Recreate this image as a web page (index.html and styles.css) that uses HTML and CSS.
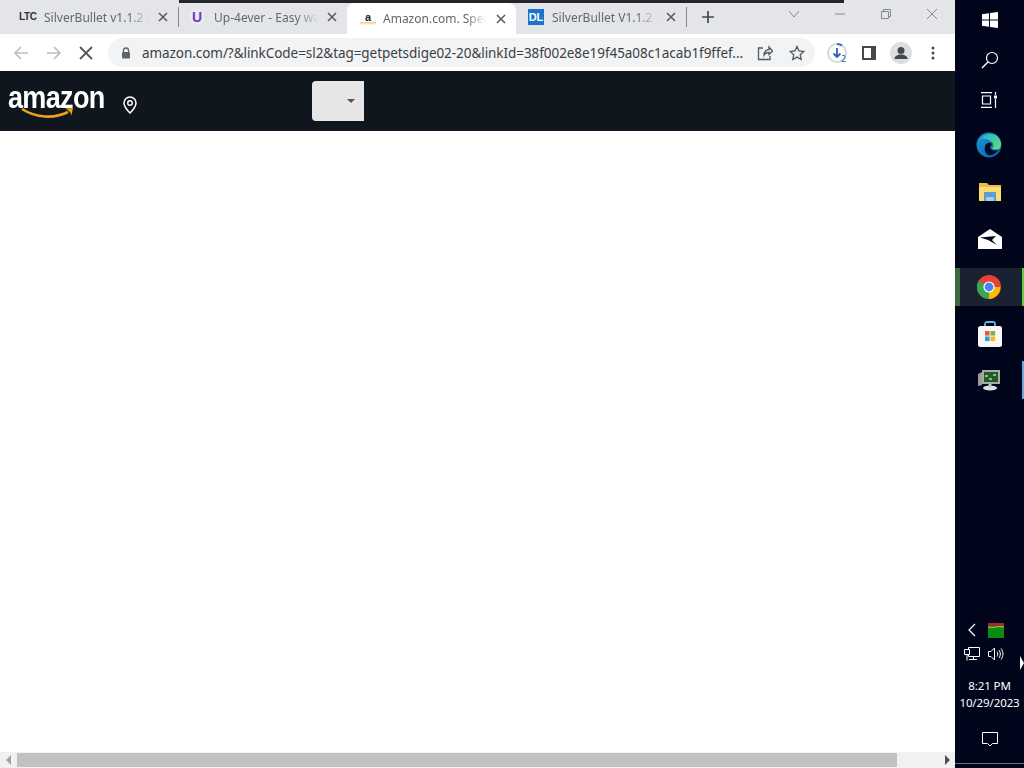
FILE: index.html
```html
<!DOCTYPE html>
<html>

<head>
    <meta charset="utf-8">
    <title>Amazon.com. Spend less. Smile more.</title>
    <link rel="stylesheet" href="styles.css">
</head>

<body>
    <div class="screen">
        <div class="browser">
            <div class="tabstrip">
                <div class="topbar"></div>
                <div class="tab tab-first">
                    <span class="fav fav-ltc">LTC</span>
                    <span class="tabtitle">SilverBullet v1.1.2 Cracked</span>
                    <svg class="tabclose" viewBox="0 0 10 10"><path d="M1 1l8 8M9 1l-8 8"/></svg>
                </div>
                <div class="tab tab-second">
                    <span class="fav fav-u">U</span>
                    <span class="tabtitle">Up-4ever - Easy way to share</span>
                    <svg class="tabclose" viewBox="0 0 10 10"><path d="M1 1l8 8M9 1l-8 8"/></svg>
                </div>
                <div class="tab tab-active">
                    <span class="fav fav-a">a</span>
                    <span class="tabtitle">Amazon.com. Spend less.</span>
                    <svg class="tabclose" viewBox="0 0 10 10"><path d="M1 1l8 8M9 1l-8 8"/></svg>
                </div>
                <div class="tab tab-last">
                    <span class="fav fav-dl">DL</span>
                    <span class="tabtitle">SilverBullet V1.1.2 Free</span>
                    <svg class="tabclose" viewBox="0 0 10 10"><path d="M1 1l8 8M9 1l-8 8"/></svg>
                </div>
                <svg class="newtab" viewBox="0 0 12 12"><path d="M6 0v12M0 6h12"/></svg>
                <div class="winctrls">
                    <svg class="winicon" viewBox="0 0 12 12"><path d="M1 3l5 6 5-6"/></svg>
                    <svg class="winicon" viewBox="0 0 12 12"><path d="M1 6h10"/></svg>
                    <svg class="winicon" viewBox="0 0 12 12"><path d="M1.500 3.500h7v7h-7zM3.500 3.500v-2h7v7h-2"/></svg>
                    <svg class="winicon" viewBox="0 0 12 12"><path d="M1 1l10 10M11 1l-10 10"/></svg>
                </div>
            </div>

            <div class="toolbar">
                <svg class="navicon nav-off" viewBox="0 0 16 16"><path d="M15 8H2M8 2L2 8l6 6"/></svg>
                <svg class="navicon nav-off" viewBox="0 0 16 16"><path d="M1 8h13M8 2l6 6-6 6"/></svg>
                <svg class="navicon nav-stop" viewBox="0 0 14 14"><path d="M1 1l12 12M13 1L1 13"/></svg>
                <div class="omnibox">
                    <svg class="lock" viewBox="0 0 10 12"><path d="M2.500 5V3.500a2.500 2.500 0 0 1 5 0V5" fill="none" stroke="#5f6368" stroke-width="1.300"/><rect x="1" y="5" width="8" height="6.500" rx="1" fill="#5f6368"/></svg>
                    <span class="url">amazon.com/?&amp;linkCode=sl2&amp;tag=getpetsdige02-20&amp;linkId=38f002e8e19f45a08c1acab1f9ffef...</span>
                    <svg class="omniicon share" viewBox="0 0 16 16"><path d="M6 3H1.500v11.500H13V11M7 10c0-3.500 2.500-5.500 5-5.500V2l3.500 4L12 9.500V7.500C10 7.500 8 8.300 7 10z"/></svg>
                    <svg class="omniicon star" viewBox="0 0 16 16"><path d="M8 1.500l2 4.500 4.800.5-3.600 3.200 1 4.800L8 12.100l-4.200 2.400 1-4.800L1.200 6.500 6 6z"/></svg>
                </div>
                <svg class="download" viewBox="0 0 22 22">
                    <circle cx="11" cy="11" r="9" fill="none" stroke="#d5d7da" stroke-width="2"/>
                    <path d="M11 2a9 9 0 0 1 5 1.500" fill="none" stroke="#2f62b8" stroke-width="2"/>
                    <path d="M11 6v9M7.500 11.500L11 15l3.500-3.500" fill="none" stroke="#2f62b8" stroke-width="1.800"/>
                </svg>
                <span class="dlcount">2</span>
                <div class="sidepanel"></div>
                <svg class="avatar" viewBox="0 0 22 22">
                    <circle cx="11" cy="11" r="11" fill="#dcdee1"/>
                    <circle cx="11" cy="8.500" r="3.500" fill="#44484d"/>
                    <path d="M4.500 17c0-3 3-4.500 6.500-4.500s6.500 1.500 6.500 4.500z" fill="#44484d"/>
                </svg>
                <svg class="kebab" viewBox="0 0 4 14"><circle cx="2" cy="2" r="1.500"/><circle cx="2" cy="7" r="1.500"/><circle cx="2" cy="12" r="1.500"/></svg>
            </div>

            <div class="amzbar">
                <div class="amzlogo">
                    <span class="amzword">amazon</span>
                    <svg class="amzsmile" viewBox="0 0 54 12"><path d="M1 2c14 9 32 10 46 3" fill="none" stroke="#f0a020" stroke-width="2.600"/><path d="M44 1.500l8-.5-1.500 7.500c-.5-3-3-5.500-6.500-7z" fill="#f0a020"/></svg>
                </div>
                <svg class="amzpin" viewBox="0 0 14 18"><path d="M7 1a6 6 0 0 0-6 6c0 4 6 10 6 10s6-6 6-10a6 6 0 0 0-6-6z" fill="none" stroke="#fff" stroke-width="1.500"/><circle cx="7" cy="7" r="2.300" fill="none" stroke="#fff" stroke-width="1.400"/></svg>
                <div class="amzselect"><span class="caret"></span></div>
            </div>

            <div class="content"></div>

            <div class="hscroll">
                <span class="arrow arrow-left"></span>
                <div class="track"><div class="thumb"></div></div>
                <span class="arrow arrow-right"></span>
            </div>
        </div>

        <div class="taskbar">
            <svg class="task-win" viewBox="0 0 16 16"><path d="M0 2.300l7-1v6.300H0zM8 1.100L16 0v7.600H8zM0 8.500h7v6.300l-7-1zM8 8.500h8V16l-8-1.100z" fill="#fff"/></svg>
            <svg class="task-search" viewBox="0 0 18 18"><circle cx="11" cy="7" r="5.500" fill="none" stroke="#fff" stroke-width="1.200"/><path d="M7 11l-6 6" stroke="#fff" stroke-width="1.400"/></svg>
            <svg class="task-view" viewBox="0 0 17 16" fill="none" stroke="#fff" stroke-width="1.200"><path d="M0 .6h11M0 15.400h11M1.500 4h8v8h-8zM14.500 0v3M14.500 7v9"/><rect x="13" y="3.500" width="3" height="3" fill="#fff" stroke="none"/></svg>
            <svg class="task-edge" viewBox="0 0 26 26">
                <defs>
                    <linearGradient id="edgeA" x1="0" y1="0" x2="1" y2="1"><stop offset="0" stop-color="#1a9bd7"/><stop offset="1" stop-color="#0c59a4"/></linearGradient>
                    <linearGradient id="edgeB" x1="0" y1="0" x2="1" y2="1"><stop offset="0" stop-color="#1db6d6"/><stop offset="1" stop-color="#6fdc6a"/></linearGradient>
                </defs>
                <circle cx="13" cy="13" r="12.500" fill="url(#edgeA)"/>
                <path d="M5 7c3-5 12-7 17-2 3 3 4 8 2 11-2 2-7 2-8 0 2-1 2-4 0-6-3-3-9-4-11-3z" fill="url(#edgeB)"/>
                <path d="M9 15c0-3 3-5 6-4 1 1 1 3-1 4 0 3 4 4 8 3-2 4-7 6-10 5-3-2-4-5-3-8z" fill="#020a2a"/>
            </svg>
            <svg class="task-folder" viewBox="0 0 22 18"><path d="M0 0h8l2 2h12v16H0z" fill="#e9bb4c"/><path d="M0 4h22v14H0z" fill="#fbdc6e"/><path d="M5 9h12v9h-2.500v-4h-7v4H5z" fill="#5a9fd4"/><rect x="7.500" y="14" width="7" height="4" fill="#a9cde8"/></svg>
            <svg class="task-mail" viewBox="0 0 24 20"><path d="M0 8L12 0l12 8v12H0z" fill="#fff"/><path d="M2 8.500L18 7l-4 4 5 5-9-5z" fill="#020a2a"/></svg>
            <div class="task-item task-chrome">
                <svg viewBox="0 0 24 24">
                    <circle cx="12" cy="12" r="12" fill="#e94235"/>
                    <path d="M12 12L1.600 6A12 12 0 0 0 12 24l5.200-9z" fill="#34a853"/>
                    <path d="M12 12h11.400A12 12 0 0 1 12 24z" fill="#fbbc04"/>
                    <circle cx="12" cy="12" r="5.600" fill="#fff"/>
                    <circle cx="12" cy="12" r="4.400" fill="#4285f4"/>
                </svg>
            </div>
            <svg class="task-store" viewBox="0 0 24 26">
                <path d="M7 6V3a2 2 0 0 1 2-2h6a2 2 0 0 1 2 2v3" fill="none" stroke="#63b2e0" stroke-width="1.800"/>
                <rect x="0" y="5" width="24" height="21" rx="2.500" fill="#f7f7f7"/>
                <rect x="7" y="10" width="4.600" height="4.600" fill="#e8573f"/>
                <rect x="12.500" y="10" width="4.600" height="4.600" fill="#7cb342"/>
                <rect x="7" y="15.500" width="4.600" height="4.600" fill="#2e9be0"/>
                <rect x="12.500" y="15.500" width="4.600" height="4.600" fill="#f9b916"/>
            </svg>
            <div class="task-item task-app">
                <svg viewBox="0 0 24 22">
                    <path d="M1 5l4-2v13l-4 1z" fill="#9a9d9c"/>
                    <rect x="5" y="1" width="18" height="14" fill="#a8aaa8"/>
                    <rect x="7" y="3" width="14" height="10" fill="#235a2c"/>
                    <path d="M8 6h3v2H8zM12 9h3v2h-3zM16 5h3v2h-3z" fill="#79c57f"/>
                    <ellipse cx="13" cy="19" rx="7" ry="2.400" fill="#e0e0e0"/>
                    <rect x="11.500" y="15" width="3" height="3" fill="#c6c6c6"/>
                </svg>
            </div>

            <div class="tray">
                <div class="trayrow trayrow-top">
                    <svg class="tray-chevron" viewBox="0 0 8 14"><path d="M7 1L1 7l6 6" fill="none" stroke="#fff" stroke-width="1.200"/></svg>
                    <svg class="tray-meter" viewBox="0 0 16 15"><rect width="16" height="15" fill="#0d8a12"/><rect width="16" height="3" fill="#a52a2a"/><path d="M0 4q4 1 8 0t8 0" fill="none" stroke="#9fcf4a"/></svg>
                </div>
                <div class="trayrow trayrow-bottom">
                    <svg class="tray-net" viewBox="0 0 16 14" fill="none" stroke="#fff"><path d="M4.500 .5h11v9h-11zM5 12.500h8M9.500 9.500v3"/><path d="M.5 2.500h5v5h-5z" fill="#020a2a"/><path d="M3 7.500v6"/></svg>
                    <svg class="tray-vol" viewBox="0 0 16 14" fill="none" stroke="#fff"><path d="M.5 4.500h2.500L6.500 1v12L3 9.500H.5zM9 4.500c1 1.500 1 3.500 0 5M11 3c1.800 2.500 1.800 5.500 0 8M13 1.500c2.600 3.500 2.600 7.500 0 11"/></svg>
                </div>
                <div class="clock">
                    <div>8:21 PM</div>
                    <div>10/29/2023</div>
                </div>
                <svg class="tray-notify" viewBox="0 0 16 15"><path d="M.5.500h15v11h-5L8 14l-2.500-2.500h-5z" fill="none" stroke="#fff"/></svg>
                <div class="trayline"></div>
            </div>
            <span class="pointer"></span>
        </div>
    </div>
</body>

</html>
```

FILE: styles.css
```css
* {
    padding: 0;
    margin: 0;
    box-sizing: border-box;
}

html, body {
    width: 1024px;
    height: 768px;
    overflow: hidden;
    background: #fff;
    font-family: "Noto Sans", "Liberation Sans", sans-serif;
}

.screen {
    display: flex;
    width: 1024px;
    height: 768px;
}

.browser {
    display: flex;
    flex-direction: column;
    width: 955px;
}

/* tabs */
.tabstrip {
    position: relative;
    display: flex;
    align-items: center;
    height: 34px;
    background: #e3e5e8;
}

.topbar {
    position: absolute;
    top: 0;
    left: 179px;
    width: 665px;
    height: 3px;
    background: #26262a;
}

.tab {
    display: flex;
    align-items: center;
    height: 34px;
    font-size: 12px;
    color: #63676b;
}

.tab-first {
    width: 179px;
    padding-left: 19px;
    border-right: 1px solid #85888c;
}

.tab-second {
    width: 168px;
    padding-left: 10px;
}

.tab-active {
    width: 169px;
    margin-top: 3px;
    height: 31px;
    padding-left: 13px;
    background: #fff;
    border-radius: 8px 8px 0 0;
}

.tab-last {
    width: 171px;
    padding-left: 12px;
    border-right: 1px solid #85888c;
}

.tab-first, .tab-last {
    border-image: linear-gradient(#e3e5e8 8px, #85888c 8px, #85888c 26px, #e3e5e8 26px) 1;
}

.fav {
    flex: none;
    display: block;
    width: 16px;
    height: 16px;
    margin-right: 9px;
    text-align: center;
    font-family: "Liberation Sans", sans-serif;
    font-weight: 700;
    line-height: 16px;
}

.fav-ltc {
    width: 16px;
    font-size: 10px;
    color: #333;
    letter-spacing: -.4px;
}

.fav-u {
    font-size: 14px;
    color: #6b3fc0;
    background: #ece9f2;
    border-radius: 50%;
}

.fav-a {
    font-size: 11px;
    line-height: 13px;
    color: #222;
    background: linear-gradient(#fff 11px, #f3c76d 11px, #fff 14px);
    margin-right: 7px;
}

.fav-dl {
    font-size: 11px;
    color: #fff;
    background: #1a76cc;
    margin-right: 8px;
}

.tabtitle {
    flex: 1;
    overflow: hidden;
    white-space: nowrap;
    -webkit-mask-image: linear-gradient(to right, #000 80%, transparent 100%);
    mask-image: linear-gradient(to right, #000 80%, transparent 100%);
}

.tabclose {
    flex: none;
    width: 10px;
    height: 10px;
    margin: 0 10px 0 9px;
    fill: none;
    stroke: #55585c;
    stroke-width: 1.500;
}

.newtab {
    flex: none;
    width: 12px;
    height: 12px;
    margin-left: 15px;
    fill: none;
    stroke: #45484c;
    stroke-width: 1.700;
}

.winctrls {
    display: flex;
    gap: 34px;
    margin-left: 74px;
    align-self: flex-start;
    padding-top: 8px;
}

.winicon {
    width: 12px;
    height: 12px;
    fill: none;
    stroke: #85888b;
    stroke-width: 1;
}

/* address bar */
.toolbar {
    position: relative;
    display: flex;
    align-items: center;
    height: 37px;
    padding-left: 13px;
    background: #fff;
}

.navicon {
    flex: none;
    width: 16px;
    height: 16px;
    fill: none;
    stroke-width: 1.700;
}

.nav-off {
    stroke: #bcbfc3;
    margin-right: 17px;
}

.nav-stop {
    width: 14px;
    height: 14px;
    margin-right: 15px;
    stroke: #55585c;
    stroke-width: 1.800;
}

.omnibox {
    display: flex;
    align-items: center;
    width: 707px;
    height: 29px;
    padding-left: 13px;
    background: #f1f3f4;
    border-radius: 15px;
}

.lock {
    flex: none;
    width: 10px;
    height: 12px;
    margin-right: 11px;
}

.url {
    flex: none;
    width: 601px;
    white-space: nowrap;
    font-size: 13.500px;
    letter-spacing: -.06px;
    color: #3c4043;
}

.omniicon {
    flex: none;
    width: 16px;
    height: 16px;
    fill: none;
    stroke: #55585c;
    stroke-width: 1.300;
}

.share {
    margin-left: 14px;
}

.star {
    margin-left: 16px;
}

.download {
    flex: none;
    width: 22px;
    height: 22px;
    margin-left: 11px;
}

.dlcount {
    position: absolute;
    left: 841px;
    top: 18px;
    font-size: 9px;
    color: #2f62b8;
}

.sidepanel {
    flex: none;
    width: 14px;
    height: 14px;
    margin-left: 14px;
    background: #fff;
    border: 2px solid #45484c;
    border-right-width: 5px;
}

.avatar {
    flex: none;
    width: 22px;
    height: 22px;
    margin-left: 14px;
}

.kebab {
    flex: none;
    width: 4px;
    height: 14px;
    margin-left: 19px;
    fill: #45484c;
}

/* amazon nav */
.amzbar {
    display: flex;
    align-items: center;
    height: 60px;
    background: #10161e;
}

.amzlogo {
    position: relative;
    flex: none;
    width: 123px;
    height: 60px;
    padding: 8px 0 0 8px;
}

.amzword {
    display: block;
    width: 110px;
    font-family: "Liberation Sans", sans-serif;
    font-weight: 700;
    font-size: 32px;
    line-height: 36px;
    letter-spacing: -.8px;
    color: #fff;
    transform: scaleX(.845);
    transform-origin: left center;
}

.amzsmile {
    position: absolute;
    left: 21px;
    top: 36px;
    width: 54px;
    height: 12px;
}

.amzpin {
    flex: none;
    width: 14px;
    height: 18px;
    margin-top: 8px;
}

.amzselect {
    display: flex;
    align-items: center;
    justify-content: flex-end;
    width: 52px;
    height: 40px;
    margin-left: 175px;
    padding-right: 9px;
    background: #e6e6e6;
    border-radius: 4px 0 0 4px;
}

.caret {
    width: 0;
    height: 0;
    border-left: 4px solid transparent;
    border-right: 4px solid transparent;
    border-top: 4px solid #555;
}

.content {
    flex: 1;
    background: #fff;
}

/* bottom scrollbar */
.hscroll {
    display: flex;
    align-items: center;
    height: 16px;
    background: #f1f1f1;
}

.track {
    flex: 1;
    height: 14px;
}

.thumb {
    width: 880px;
    height: 14px;
    margin-left: 1px;
    background: #c1c1c1;
}

.arrow {
    flex: none;
    width: 16px;
    display: flex;
    justify-content: center;
}

.arrow::before {
    content: "";
    border-top: 5px solid transparent;
    border-bottom: 5px solid transparent;
}

.arrow-left::before {
    border-right: 5px solid #a3a3a3;
}

.arrow-right::before {
    border-left: 5px solid #505050;
}

/* windows taskbar */
.taskbar {
    position: relative;
    display: flex;
    flex-direction: column;
    align-items: center;
    width: 69px;
    height: 768px;
    background: #01051c;
}

.taskbar > svg {
    flex: none;
}

.task-win {
    width: 16px;
    height: 16px;
    margin-top: 12px;
}

.task-search {
    width: 18px;
    height: 18px;
    margin-top: 23px;
}

.task-view {
    width: 17px;
    height: 16px;
    margin-top: 23px;
}

.task-edge {
    width: 26px;
    height: 26px;
    margin-top: 24px;
    margin-right: 1px;
}

.task-folder {
    width: 22px;
    height: 18px;
    margin-top: 25px;
}

.task-mail {
    width: 24px;
    height: 20px;
    margin-top: 28px;
}

.task-item {
    display: flex;
    align-items: center;
    justify-content: center;
    width: 69px;
    height: 38px;
}

.task-chrome {
    margin-top: 19px;
    background: #1a2130;
    border-right: 2px solid #5fcf3d;
    border-left: 5px solid #38693f;
}

.task-chrome svg {
    width: 24px;
    height: 24px;
    margin-right: 4px;
}

.task-store {
    width: 24px;
    height: 26px;
    margin-top: 15px;
}

.task-app {
    margin-top: 14px;
    border-right: 2px solid #6ea9d8;
}

.task-app svg {
    width: 24px;
    height: 22px;
}

.tray {
    display: flex;
    flex-direction: column;
    width: 69px;
    margin-top: auto;
}

.trayrow {
    display: flex;
    align-items: center;
    height: 16px;
    margin-bottom: 8px;
}

.trayrow-top {
    padding-left: 13px;
    gap: 12px;
}

.trayrow-bottom {
    padding-left: 9px;
    gap: 8px;
}

.tray-chevron {
    width: 8px;
    height: 14px;
}

.tray-meter {
    width: 16px;
    height: 15px;
}

.tray-net {
    width: 16px;
    height: 14px;
}

.tray-vol {
    width: 16px;
    height: 14px;
}

.clock {
    margin-top: 7px;
    text-align: center;
    font-size: 11.500px;
    letter-spacing: -.1px;
    line-height: 17px;
    color: #fff;
}

.tray-notify {
    width: 16px;
    height: 15px;
    margin: 21px auto 0;
}

.trayline {
    width: 69px;
    height: 1px;
    margin-top: 16px;
    margin-bottom: 4px;
    background: #6d7078;
}

.pointer {
    position: absolute;
    right: 0;
    top: 656px;
    width: 0;
    height: 0;
    border-top: 7px solid transparent;
    border-bottom: 7px solid transparent;
    border-left: 4px solid #fff;
}
```
